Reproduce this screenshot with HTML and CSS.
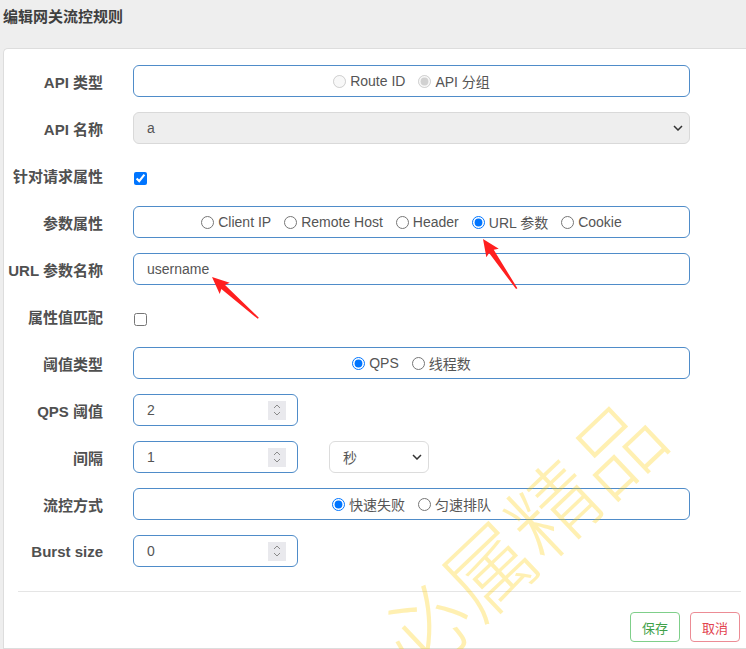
FILE: index.html
```html
<!DOCTYPE html>
<html lang="zh-CN">

<head>
    <meta charset="UTF-8">
    <meta name="viewport" content="width=device-width, initial-scale=1.0">
    <title>编辑网关流控规则</title>
    <link rel="stylesheet" href="styles.css">
</head>

<body>
    <div class="page">
        <h4 class="title">编辑网关流控规则</h4>

        <div class="panel">
            <form class="rule-form">
                <label class="field-label">API 类型</label>
                <div class="radio-box">
                    <label class="opt"><input type="radio" name="apiType" disabled>Route ID</label>
                    <label class="opt"><input type="radio" name="apiType" checked disabled>API 分组</label>
                </div>

                <label class="field-label">API 名称</label>
                <div class="select-box disabled">
                    <span>a</span>
                    <svg class="chevron" width="10" height="6" viewBox="0 0 10 6"><path d="M1 1l4 4 4-4" fill="none" stroke="#333" stroke-width="1.5"/></svg>
                </div>

                <label class="field-label">针对请求属性</label>
                <div class="check-cell"><input type="checkbox" checked></div>

                <label class="field-label">参数属性</label>
                <div class="radio-box">
                    <label class="opt"><input type="radio" name="paramItem">Client IP</label>
                    <label class="opt"><input type="radio" name="paramItem">Remote Host</label>
                    <label class="opt"><input type="radio" name="paramItem">Header</label>
                    <label class="opt"><input type="radio" name="paramItem" checked>URL 参数</label>
                    <label class="opt"><input type="radio" name="paramItem">Cookie</label>
                </div>

                <label class="field-label">URL 参数名称</label>
                <input class="text-input" type="text" value="username">

                <label class="field-label">属性值匹配</label>
                <div class="check-cell"><input type="checkbox"></div>

                <label class="field-label">阈值类型</label>
                <div class="radio-box">
                    <label class="opt"><input type="radio" name="grade" checked>QPS</label>
                    <label class="opt"><input type="radio" name="grade">线程数</label>
                </div>

                <label class="field-label">QPS 阈值</label>
                <div class="num-box">
                    <input type="text" value="2">
                    <span class="spin"><svg width="10" height="14" viewBox="0 0 10 14"><path d="M2 5l3-3 3 3M2 9l3 3 3-3" fill="none" stroke="#8a8a8a" stroke-width="1"/></svg></span>
                </div>

                <label class="field-label">间隔</label>
                <div class="inline-row">
                    <div class="num-box">
                        <input type="text" value="1">
                        <span class="spin"><svg width="10" height="14" viewBox="0 0 10 14"><path d="M2 5l3-3 3 3M2 9l3 3 3-3" fill="none" stroke="#8a8a8a" stroke-width="1"/></svg></span>
                    </div>
                    <div class="select-box unit">
                        <span>秒</span>
                        <svg class="chevron" width="10" height="6" viewBox="0 0 10 6"><path d="M1 1l4 4 4-4" fill="none" stroke="#333" stroke-width="1.5"/></svg>
                    </div>
                </div>

                <label class="field-label">流控方式</label>
                <div class="radio-box">
                    <label class="opt"><input type="radio" name="behavior" checked>快速失败</label>
                    <label class="opt"><input type="radio" name="behavior">匀速排队</label>
                </div>

                <label class="field-label">Burst size</label>
                <div class="num-box">
                    <input type="text" value="0">
                    <span class="spin"><svg width="10" height="14" viewBox="0 0 10 14"><path d="M2 5l3-3 3 3M2 9l3 3 3-3" fill="none" stroke="#8a8a8a" stroke-width="1"/></svg></span>
                </div>
            </form>

            <div class="divider"></div>

            <div class="footer">
                <button class="btn btn-save" type="button">保存</button>
                <button class="btn btn-cancel" type="button">取消</button>
            </div>
        </div>

        <div class="watermark">必属精品</div>

        <!-- red pointers drawn over the form -->
        <svg class="marks" width="746" height="649" viewBox="0 0 746 649">
            <g transform="translate(483 239) rotate(55.8)">
                <polygon points="0,0 17,-7.5 15,-2.8 60,-0.8 60,0.8 15,2.8 17,7.5" fill="#ff1f1f"/>
            </g>
            <g transform="translate(212 277) rotate(41.7)">
                <polygon points="0,0 17,-7.5 15,-2.8 62,-0.8 62,0.8 15,2.8 17,7.5" fill="#ff1f1f"/>
            </g>
        </svg>
    </div>
</body>

</html>
```

FILE: styles.css
```css
body {
    margin: 0;
    background-color: #eeeeee;
    font-family: "Liberation Sans", "Noto Sans CJK SC", sans-serif;
    color: #555;
    overflow: hidden;
}

.page {
    position: relative;
    height: 649px;
    overflow: hidden;
}

.title {
    margin: 0;
    height: 48px;
    line-height: 34px;
    padding-left: 3px;
    font-size: 15px;
    font-weight: bold;
    color: #3f3f3f;
}

.panel {
    margin-left: 3px;
    margin-right: -10px;
    height: 601px;
    background-color: white;
    border: 1px solid #dddddd;
    border-right: none;
    border-radius: 5px 0 0 0;
    box-sizing: border-box;
}

.rule-form {
    display: grid;
    grid-template-columns: 99px 557px;
    grid-auto-rows: 32px;
    column-gap: 30px;
    row-gap: 15px;
    align-items: center;
    padding-top: 16px;
}

.field-label {
    text-align: right;
    font-size: 15px;
    font-weight: bold;
    color: #505050;
}

.radio-box {
    display: flex;
    justify-content: center;
    align-items: center;
    gap: 13px;
    height: 32px;
    border: 1px solid #4f8cc9;
    border-radius: 6px;
    box-sizing: border-box;
    font-size: 14px;
}

.opt {
    display: inline-flex;
    align-items: center;
    gap: 4px;
    color: #555;
}

.opt input {
    margin: 0;
    width: 13px;
    height: 13px;
}

.check-cell {
    display: flex;
    align-items: center;
    height: 32px;
}

.check-cell input {
    margin: 6px 0 0 1px;
    width: 13px;
    height: 13px;
}

.text-input {
    width: 100%;
    height: 32px;
    margin: 0;
    padding: 0 13px;
    border: 1px solid #4f8cc9;
    border-radius: 6px;
    box-sizing: border-box;
    font-family: inherit;
    font-size: 14px;
    color: #555;
    outline: none;
}

.select-box {
    display: flex;
    justify-content: space-between;
    align-items: center;
    height: 32px;
    padding: 0 6px 0 13px;
    border: 1px solid #dcdcdc;
    border-radius: 6px;
    box-sizing: border-box;
    font-size: 14px;
    color: #555;
    background-color: white;
}

.select-box.disabled {
    background-color: #eeeeee;
    border-color: #d9d9d9;
}

.select-box.unit {
    width: 100px;
}

.inline-row {
    display: flex;
    align-items: center;
    gap: 31px;
}

.num-box {
    display: flex;
    align-items: center;
    width: 165px;
    height: 32px;
    padding: 0 11px 0 13px;
    border: 1px solid #4f8cc9;
    border-radius: 6px;
    box-sizing: border-box;
}

.num-box input {
    flex: 1;
    min-width: 0;
    border: none;
    padding: 0;
    outline: none;
    font-family: inherit;
    font-size: 14px;
    color: #555;
}

.spin {
    display: flex;
    align-items: center;
    justify-content: center;
    width: 18px;
    height: 19px;
    background-color: #e9e9ed;
}

.divider {
    height: 1px;
    margin: 24px 15px 0 14px;
    background-color: #e5e5e5;
}

.footer {
    display: flex;
    justify-content: flex-end;
    gap: 10px;
    padding: 20px 16px 0 0;
}

.btn {
    width: 50px;
    height: 30px;
    padding: 0;
    background-color: white;
    border: 1px solid;
    border-radius: 4px;
    font-family: inherit;
    font-size: 13px;
    cursor: pointer;
}

.btn-save {
    border-color: #7fcf8a;
    color: #3fa14a;
}

.btn-cancel {
    border-color: #ec8c95;
    color: #e2434f;
}

.watermark {
    position: absolute;
    left: 518px;
    top: 536px;
    transform: translate(-50%, -50%) rotate(-43.5deg);
    font-family: "Noto Sans CJK SC", sans-serif;
    font-size: 88px;
    font-weight: 300;
    line-height: 1;
    white-space: nowrap;
    color: rgba(255, 204, 0, 0.3);
    pointer-events: none;
}

.marks {
    position: absolute;
    left: 0;
    top: 0;
    pointer-events: none;
}
```
